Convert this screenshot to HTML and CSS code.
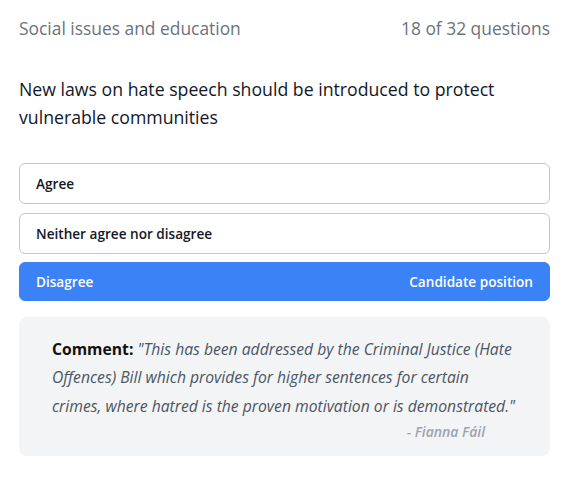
FILE: index.html
```html
<!DOCTYPE html>
<html lang="en">
<head>
<meta charset="utf-8">
<link rel="stylesheet" href="styles.css">
</head>
<body>
<main class="quiz">
  <header class="quiz-head">
    <span class="category">Social issues and education</span>
    <span class="progress">18 of 32 questions</span>
  </header>
  <h1 class="question">New laws on hate speech should be introduced to protect vulnerable communities</h1>
  <div class="options">
    <div class="option">Agree</div>
    <div class="option">Neither agree nor disagree</div>
    <div class="option selected"><span>Disagree</span><span>Candidate position</span></div>
  </div>
  <section class="comment">
    <p class="comment-text"><strong class="label">Comment:</strong> <em>"This has been addressed by the Criminal Justice (Hate Offences) Bill which provides for higher sentences for certain crimes, where hatred is the proven motivation or is demonstrated."</em></p>
    <p class="attribution">- Fianna Fáil</p>
  </section>
</main>
</body>
</html>
```
FILE: styles.css
```css
html, body { margin: 0; padding: 0; background: #fff; }
body { font-family: "Open Sans", "Noto Sans", sans-serif; color: #111827; }
.quiz { padding: 14px 18px 0 19px; }
.quiz-head { display: flex; justify-content: space-between; font-size: 17.4px; line-height: 28px; color: #6b7280; }
.question { margin: 33px 0 32px; font-size: 17.7px; line-height: 28px; font-weight: 500; color: #111827; }
.options { display: flex; flex-direction: column; gap: 9px; }
.option { display: flex; justify-content: space-between; border: 1px solid #c4c6ce; border-radius: 6px; padding: 0 16px; height: 39px; align-items: center; font-size: 13.6px; font-weight: 600; color: #111827; }
.option.selected { background: #3b82f6; border-color: #3b82f6; color: #fff; height: 36.5px; margin-top: -1px; }
.comment { margin-top: 16px; background: #f3f4f6; border-radius: 8px; padding: 18px 33px 14px; }
.comment-text { margin: 0; font-size: 15.7px; line-height: 28.5px; color: #4b5563; }
.comment-text .label { color: #111; font-weight: 700; font-style: normal; }
.attribution { margin: 2px 0 0; text-align: right; padding-right: 32px; font-size: 14px; line-height: 20px; font-style: italic; font-weight: 600; color: #9ca3af; }
```
